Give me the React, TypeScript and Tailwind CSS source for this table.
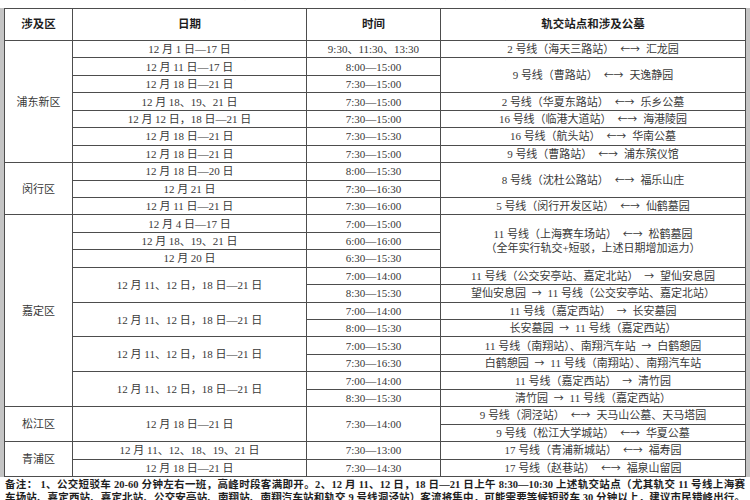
type Cell = { t: string[]; rs?: number };
type Row = { d?: Cell; date?: Cell; time?: Cell; line?: Cell };

const c = (t: string | string[], rs?: number): Cell => ({ t: Array.isArray(t) ? t : [t], rs });

const D1821 = '12 月 18 日—21 日';
const DJD = '12 月 11、12 日，18 日—21 日';

const rows: Row[] = [
  { d: c('浦东新区', 7), date: c('12 月 1 日—17 日'), time: c('9:30、11:30、13:30'), line: c('2 号线（海天三路站） ←→ 汇龙园') },
  { date: c('12 月 11 日—17 日'), time: c('8:00—15:00'), line: c('9 号线（曹路站） ←→ 天逸静园', 2) },
  { date: c(D1821), time: c('7:30—15:00') },
  { date: c('12 月 18、19、21 日'), time: c('7:30—15:00'), line: c('2 号线（华夏东路站） ←→ 乐乡公墓') },
  { date: c('12 月 12 日，18 日—21 日'), time: c('7:30—15:00'), line: c('16 号线（临港大道站） ←→ 海港陵园') },
  { date: c(D1821), time: c('7:30—15:30'), line: c('16 号线（航头站） ←→ 华南公墓') },
  { date: c(D1821), time: c('7:30—15:00'), line: c('9 号线（曹路站） ←→ 浦东殡仪馆') },
  { d: c('闵行区', 3), date: c('12 月 18 日—20 日'), time: c('8:00—15:30'), line: c('8 号线（沈杜公路站） ←→ 福乐山庄', 2) },
  { date: c('12 月 21 日'), time: c('7:30—16:30') },
  { date: c('12 月 11 日—21 日'), time: c('7:30—16:00'), line: c('5 号线（闵行开发区站） ←→ 仙鹤墓园') },
  {
    d: c('嘉定区', 11),
    date: c('12 月 4 日—17 日'),
    time: c('7:00—15:00'),
    line: c(['11 号线（上海赛车场站） ←→ 松鹤墓园', '（全年实行轨交+短驳，上述日期增加运力）'], 3),
  },
  { date: c('12 月 18、19、21 日'), time: c('6:00—16:00') },
  { date: c('12 月 20 日'), time: c('6:30—15:30') },
  { date: c(DJD, 2), time: c('7:00—14:00'), line: c('11 号线（公交安亭站、嘉定北站） → 望仙安息园') },
  { time: c('8:30—15:30'), line: c('望仙安息园 → 11 号线（公交安亭站、嘉定北站）') },
  { date: c(DJD, 2), time: c('7:00—14:00'), line: c('11 号线（嘉定西站） → 长安墓园') },
  { time: c('8:00—15:30'), line: c('长安墓园 → 11 号线（嘉定西站）') },
  { date: c(DJD, 2), time: c('7:00—15:30'), line: c('11 号线（南翔站）、南翔汽车站 → 白鹤憩园') },
  { time: c('7:30—16:30'), line: c('白鹤憩园 → 11 号线（南翔站）、南翔汽车站') },
  { date: c(DJD, 2), time: c('7:00—14:00'), line: c('11 号线（嘉定西站） → 清竹园') },
  { time: c('8:30—15:30'), line: c('清竹园 → 11 号线（嘉定西站）') },
  { d: c('松江区', 2), date: c(D1821, 2), time: c('7:30—14:00', 2), line: c('9 号线（洞泾站） ←→ 天马山公墓、天马塔园') },
  { line: c('9 号线（松江大学城站） ←→ 华夏公墓') },
  { d: c('青浦区', 2), date: c('12 月 11、12、18、19、21 日'), time: c('7:30—13:00'), line: c('17 号线（青浦新城站） ←→ 福寿园') },
  { date: c(D1821), time: c('7:30—14:30'), line: c('17 号线（赵巷站） ←→ 福泉山留园') },
];

const td = 'border border-[#4d4d4d] p-0 text-center align-middle whitespace-pre text-[11px] leading-[14px]';
const th = 'border border-[#4d4d4d] p-0 text-center align-middle text-[11.5px] font-bold text-[#1e1e1e]';

// arrows come from the CJK font so they read as wide as in the scan
function Text({ s }: { s: string }) {
  const parts = s.split(/(←→|→)/);
  return (
    <>
      {parts.map((p, i) =>
        p === '←→' || p === '→' ? (
          <span key={i} className="mx-[3px] font-['Noto_Sans_CJK_SC',sans-serif] text-[10px]">
            {p}
          </span>
        ) : (
          <span key={i}>{p}</span>
        ),
      )}
    </>
  );
}

function Td({ cell }: { cell?: Cell }) {
  if (!cell) return null;
  return (
    <td rowSpan={cell.rs} className={td}>
      {cell.t.map((s, i) => (
        <div key={i}>
          <Text s={s} />
        </div>
      ))}
    </td>
  );
}

export default function App() {
  return (
    <div className="w-[750px] h-[500px] overflow-hidden bg-white text-[#383838] font-['Liberation_Serif','Noto_Sans_CJK_SC',serif]">
      {/* cut-off title */}
      <div className="h-[8px] overflow-hidden text-center">
        <div className="-mt-[14px] text-[14px] font-bold leading-[16px] text-[#a0a0a0]">
          冬至期间轨交站点至各公墓短驳公交配置情况
        </div>
      </div>

      <div className="flex">
        <div className="w-[4px] bg-[#c4c4c4]" />
        <table className="table-fixed border-collapse w-[741px]">
          <colgroup>
            <col className="w-[68px]" />
            <col className="w-[234px]" />
            <col className="w-[134px]" />
            <col className="w-[305px]" />
          </colgroup>
          <thead>
            <tr className="h-[32px]">
              <th className={th}>涉及区</th>
              <th className={th}>日期</th>
              <th className={th}>时间</th>
              <th className={th}>轨交站点和涉及公墓</th>
            </tr>
          </thead>
          <tbody>
            {rows.map((r, i) => (
              <tr key={i} className="h-[17.44px]">
                <Td cell={r.d} />
                <Td cell={r.date} />
                <Td cell={r.time} />
                <Td cell={r.line} />
              </tr>
            ))}
          </tbody>
        </table>
        <div className="flex-1 bg-[#c4c4c4]" />
      </div>

      {/* notes */}
      <div className="px-[5px] pt-[1px] text-[10.5px] font-bold leading-[13px] text-[#1e1e1e]">
        <p className="[text-align-last:justify]">
          备注： 1、公交短驳车 20-60 分钟左右一班，高峰时段客满即开。2、12 月 11、12 日，18 日—21 日上午 8:30—10:30 上述轨交站点（尤其轨交 11 号线上海赛
        </p>
        <p className="[text-align-last:justify]">
          车场站、嘉定西站、嘉定北站、公交安亭站、南翔站、南翔汽车站和轨交 9 号线洞泾站）客流将集中，可能需要等候短驳车 30 分钟以上，建议市民错峰出行。
        </p>
      </div>
    </div>
  );
}
